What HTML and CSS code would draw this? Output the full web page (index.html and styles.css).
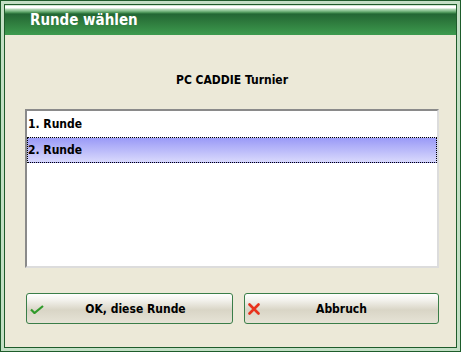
FILE: index.html
```html
<!DOCTYPE html>
<html lang="de">
<head>
    <meta charset="UTF-8">
    <title>Runde wählen</title>
    <link rel="stylesheet" href="styles.css">
</head>
<body>
    <div class="frame">
        <div class="dialog">
            <div class="titlebar">Runde wählen</div>

            <div class="content">
                <div class="caption">PC CADDIE Turnier</div>

                <div class="listbox">
                    <div class="item">1. Runde</div>
                    <div class="item selected">2. Runde</div>
                </div>

                <div class="buttons">
                    <button class="btn btn-ok">
                        <svg class="icon" width="14" height="9" viewBox="0 0 14 9">
                            <path d="M1 4.5 L4.5 8 L13 1" fill="none" stroke="#2f9a2a" stroke-width="2.2"/>
                        </svg>
                        OK, diese Runde
                    </button>
                    <button class="btn btn-cancel">
                        <svg class="icon" width="12" height="12" viewBox="0 0 12 12">
                            <path d="M1.5 1.5 L10.5 10.5 M10.5 1.5 L1.5 10.5" stroke="#e8321c" stroke-width="2.6" stroke-linecap="round"/>
                        </svg>
                        Abbruch
                    </button>
                </div>
            </div>
        </div>
    </div>
</body>
</html>
```

FILE: styles.css
```css
/* General styling */
html, body {
    margin: 0;
    padding: 0;
    width: 461px;
    height: 352px;
    font-family: "DejaVu Sans Condensed", "DejaVu Sans", sans-serif;
    font-weight: bold;
}

/* Window frame */
.frame {
    box-sizing: border-box;
    width: 461px;
    height: 352px;
    border: 1px solid #1e5c2b;
    padding: 3px;
    background-color: #c3dfc5;
}

.dialog {
    box-sizing: border-box;
    height: 100%;
    border: 1px solid #1e5c2b;
    background-color: #ece9d8;
    display: flex;
    flex-direction: column;
}

.titlebar {
    height: 30px;
    padding-left: 25px;
    color: #fff;
    font-size: 15px;
    line-height: 31px;
    background: linear-gradient(to bottom,
        #a3d0a8 0px, #ffffff 1px, #ffffff 3px, #b8dcbc 4px,
        #7fbc88 6px, #3e8a4c 8px, #236634 9px, #2f7d3e 18px, #3d9b4f 30px);
}

/* Dialog body */
.content {
    flex: 1;
    display: flex;
    flex-direction: column;
    padding: 0 17px 0 20px;
}

.caption {
    margin-top: 37px;
    text-align: center;
    font-size: 12px;
    line-height: 16px;
    color: #000;
}

.listbox {
    margin-top: 21px;
    height: 159px;
    box-sizing: border-box;
    border-style: solid;
    border-width: 2px;
    border-color: #8a8a8a #dcdcdc #dcdcdc #8a8a8a;
    background-color: #fff;
}

.item {
    height: 26px;
    padding-left: 1px;
    font-size: 12px;
    line-height: 26px;
    color: #000;
}

.item.selected {
    box-sizing: border-box;
    border: 1px dotted #000;
    padding-left: 0;
    line-height: 24px;
    background: linear-gradient(to bottom, #9a9af7, #d9d9fc);
}

/* Buttons */
.buttons {
    margin-top: 25px;
    display: flex;
    gap: 11px;
    padding-left: 1px;
}

.btn {
    position: relative;
    height: 31px;
    border: 1px solid #3a7e48;
    border-radius: 3px;
    font-family: inherit;
    font-weight: bold;
    font-size: 12px;
    color: #000;
    background: linear-gradient(to bottom, #ffffff 0%, #f4f3ee 20%, #d9d5c6 55%, #e6e3d6 100%);
    cursor: pointer;
}

.btn-ok {
    width: 207px;
    padding-left: 18px;
}

.btn-cancel {
    width: 195px;
}

.icon {
    position: absolute;
    left: 3px;
    top: 11px;
}

.btn-cancel .icon {
    top: 9px;
}
```
